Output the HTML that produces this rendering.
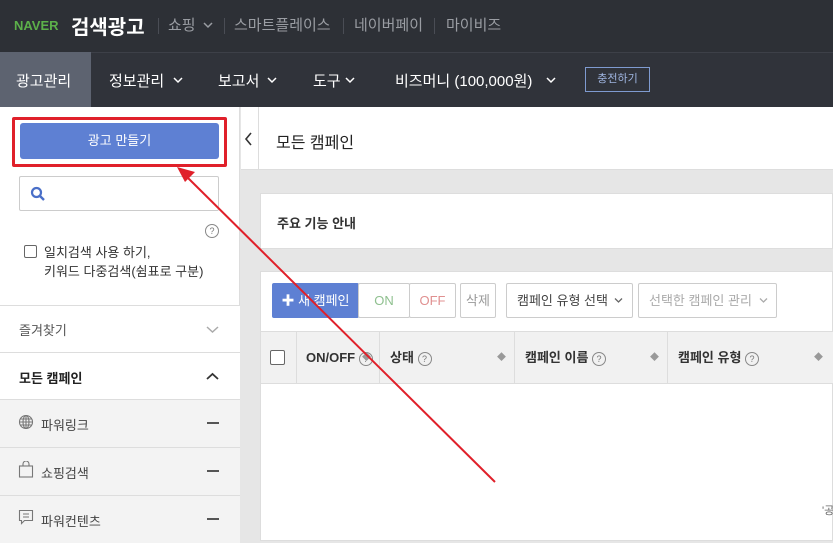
<!DOCTYPE html>
<html><head><meta charset="utf-8"><style>
*{box-sizing:border-box;margin:0;padding:0}
body{width:833px;height:541px;overflow:hidden;position:relative;font-family:"Liberation Sans","Noto Sans CJK KR",sans-serif;background:#e6e6e6;font-size:13px;color:#333}
.a{position:absolute}
.t{position:absolute;white-space:nowrap}
.row{position:absolute;left:0;width:240px;border-top:1px solid #ddd}
.btn{position:absolute;top:283px;height:35px;border:1px solid #ccc;background:#fff;font-size:13px;line-height:33px;text-align:center;border-radius:2px}
.th{position:absolute;top:331px;height:53px;border-right:1px solid #ddd;font-weight:bold;font-size:13px;line-height:53px;padding-left:10px;color:#333}
.q{display:inline-block;width:14px;height:14px;border:1px solid #888;border-radius:50%;font-size:9px;line-height:12px;text-align:center;font-weight:normal;color:#777;vertical-align:middle}
.s{position:absolute;right:8px;top:0;color:#999;font-size:9px;line-height:53px}
.sep{position:absolute;top:18px;width:1px;height:16px;background:#4a4d55}
.mi{position:absolute;left:207px;width:12px;height:2px;background:#555}
</style></head><body>
<div class="a" style="left:0;top:0;width:833px;height:52px;background:#2d3036"></div>
<div class="t" style="left:14px;top:18px;color:#5cb04a;font-weight:900;font-size:13px">NAVER</div>
<div class="t" style="left:71px;top:11px;color:#fff;font-size:20px;font-weight:bold">검색광고</div>
<div class="sep" style="left:158px"></div>
<div class="t" style="left:168px;top:14px;color:#9a9da3;font-size:15px">쇼핑</div>
<svg class="a" style="left:203px;top:21px" width="10" height="8"><path d="M1 2l4 4 4-4" fill="none" stroke="#9a9da3" stroke-width="1.5"/></svg>
<div class="sep" style="left:224px"></div>
<div class="t" style="left:234px;top:14px;color:#9a9da3;font-size:15px">스마트플레이스</div>
<div class="sep" style="left:343px"></div>
<div class="t" style="left:354px;top:14px;color:#9a9da3;font-size:15px">네이버페이</div>
<div class="sep" style="left:434px"></div>
<div class="t" style="left:446px;top:14px;color:#9a9da3;font-size:15px">마이비즈</div>
<div class="a" style="left:0;top:52px;width:833px;height:55px;background:#30333a;border-top:1px solid #3d4048"></div>
<div class="a" style="left:0;top:52px;width:91px;height:55px;background:#5d6370"></div>
<div class="t" style="left:16px;top:70px;color:#fff;font-size:15px">광고관리</div>
<div class="t" style="left:109px;top:70px;color:#fff;font-size:15px">정보관리</div>
<svg class="a" style="left:173px;top:76px" width="10" height="8"><path d="M1 2l4 4 4-4" fill="none" stroke="#fff" stroke-width="1.5"/></svg>
<div class="t" style="left:218px;top:70px;color:#fff;font-size:15px">보고서</div>
<svg class="a" style="left:267px;top:76px" width="10" height="8"><path d="M1 2l4 4 4-4" fill="none" stroke="#fff" stroke-width="1.5"/></svg>
<div class="t" style="left:313px;top:70px;color:#fff;font-size:15px">도구</div>
<svg class="a" style="left:345px;top:76px" width="10" height="8"><path d="M1 2l4 4 4-4" fill="none" stroke="#fff" stroke-width="1.5"/></svg>
<div class="t" style="left:395px;top:70px;color:#fff;font-size:15px">비즈머니 (100,000원)</div>
<svg class="a" style="left:546px;top:76px" width="10" height="8"><path d="M1 2l4 4 4-4" fill="none" stroke="#fff" stroke-width="1.5"/></svg>
<div class="a" style="left:585px;top:67px;width:65px;height:25px;border:1px solid #7f9bd0;color:#9fb5e0;font-size:11px;line-height:23px;text-align:center">충전하기</div>

<div class="a" style="left:0;top:107px;width:240px;height:434px;background:#fff;border-right:1px solid #ddd"></div>
<div class="a" style="left:12px;top:117px;width:215px;height:50px;border:3px solid #e0202a;border-radius:2px"></div>
<div class="a" style="left:20px;top:123px;width:199px;height:36px;background:#5e80d3;border-radius:3px;color:#fff;font-size:13px;line-height:36px;text-align:center">광고 만들기</div>
<div class="a" style="left:19px;top:176px;width:200px;height:35px;border:1px solid #ccc;border-radius:2px"></div>
<svg class="a" style="left:30px;top:186px" width="16" height="16"><circle cx="6.5" cy="6.5" r="4.5" fill="none" stroke="#4a6fc8" stroke-width="2.2"/><path d="M10 10l4 4" stroke="#4a6fc8" stroke-width="2.4"/></svg>
<div class="a q" style="left:205px;top:224px">?</div>
<div class="a" style="left:24px;top:245px;width:13px;height:13px;border:1px solid #666;border-radius:2px"></div>
<div class="t" style="left:44px;top:242px;font-size:13px;color:#333">일치검색 사용 하기,</div>
<div class="t" style="left:44px;top:261px;font-size:13px;color:#333">키워드 다중검색(쉼표로 구분)</div>
<div class="row" style="top:305px;height:47px;background:#fff"><span class="t" style="left:19px;top:14px;color:#555">즐겨찾기</span></div>
<svg class="a" style="left:206px;top:325px" width="13" height="9"><path d="M1 2l5.5 5 5.5-5" fill="none" stroke="#aaa" stroke-width="1.5"/></svg>
<div class="row" style="top:352px;height:47px;background:#fff"><span class="t" style="left:19px;top:15px;font-weight:bold;color:#222">모든 캠페인</span></div>
<svg class="a" style="left:206px;top:372px" width="13" height="9"><path d="M1 7l5.5-5 5.5 5" fill="none" stroke="#333" stroke-width="1.8"/></svg>
<div class="row" style="top:399px;height:48px;background:#f3f3f3"><span class="t" style="left:41px;top:15px;color:#444">파워링크</span></div>
<svg class="a" style="left:18px;top:414px" width="16" height="16" fill="none" stroke="#777" stroke-width="1.1"><circle cx="8" cy="8" r="6.5"/><ellipse cx="8" cy="8" rx="3" ry="6.5"/><path d="M1.5 8h13M2.5 5h11M2.5 11h11M8 1.5v13"/></svg>
<div class="mi" style="top:422px"></div>
<div class="row" style="top:447px;height:48px;background:#f3f3f3"><span class="t" style="left:41px;top:15px;color:#444">쇼핑검색</span></div>
<svg class="a" style="left:18px;top:461px" width="16" height="17" fill="none" stroke="#777" stroke-width="1.1"><rect x="1.5" y="5" width="13" height="11"/><path d="M5 5V3a3 3 0 0 1 6 0v2"/></svg>
<div class="mi" style="top:470px"></div>
<div class="row" style="top:495px;height:48px;background:#f3f3f3"><span class="t" style="left:41px;top:15px;color:#444">파워컨텐츠</span></div>
<svg class="a" style="left:18px;top:509px" width="16" height="17" fill="none" stroke="#777" stroke-width="1.1"><path d="M1.5 1.5h13v10h-8l-3 3v-3h-2z"/><path d="M5 5h6M5 8h6"/></svg>
<div class="mi" style="top:518px"></div>

<div class="a" style="left:241px;top:107px;width:592px;height:63px;background:#fff;border-bottom:1px solid #ddd"></div>
<div class="a" style="left:258px;top:107px;width:1px;height:63px;background:#ddd"></div>
<svg class="a" style="left:244px;top:132px" width="9" height="14"><path d="M7 1L2 7l5 6" fill="none" stroke="#333" stroke-width="1.6"/></svg>
<div class="t" style="left:276px;top:129px;font-size:16px;color:#222">모든 캠페인</div>
<div class="a" style="left:260px;top:193px;width:573px;height:56px;background:#fff;border:1px solid #ddd"></div>
<div class="t" style="left:277px;top:213px;font-size:13px;font-weight:bold;color:#333">주요 기능 안내</div>
<div class="a" style="left:260px;top:271px;width:573px;height:270px;background:#fff;border:1px solid #ddd"></div>
<div class="a" style="left:272px;top:283px;width:87px;height:35px;background:#5e80d3;border-radius:2px;color:#fff;line-height:35px;font-size:13px;text-align:center">✚ 새 캠페인</div>
<div class="btn" style="left:358px;width:52px;color:#8fc08f">ON</div>
<div class="btn" style="left:409px;width:47px;color:#e09090">OFF</div>
<div class="btn" style="left:460px;width:36px;color:#999">삭제</div>
<div class="btn" style="left:506px;width:127px;color:#444;text-align:left;padding-left:10px">캠페인 유형 선택</div>
<svg class="a" style="left:614px;top:297px" width="9" height="7"><path d="M1 1.5l3.5 3.5 3.5-3.5" fill="none" stroke="#666" stroke-width="1.3"/></svg>
<div class="btn" style="left:638px;width:139px;color:#aaa;text-align:left;padding-left:10px">선택한 캠페인 관리</div>
<svg class="a" style="left:759px;top:297px" width="9" height="7"><path d="M1 1.5l3.5 3.5 3.5-3.5" fill="none" stroke="#aaa" stroke-width="1.3"/></svg>
<div class="a" style="left:261px;top:331px;width:572px;height:53px;background:#f1f1f1;border-top:1px solid #ddd;border-bottom:1px solid #ddd"></div>
<div class="a" style="left:270px;top:350px;width:15px;height:15px;border:1px solid #666;border-radius:2px;background:#fff"></div>
<div class="a" style="left:296px;top:331px;width:1px;height:53px;background:#ddd"></div>
<div class="th" style="left:296px;width:84px">ON/OFF <span class="q">?</span><span class="s">◆</span></div>
<div class="th" style="left:380px;width:135px">상태 <span class="q">?</span><span class="s">◆</span></div>
<div class="th" style="left:515px;width:153px">캠페인 이름 <span class="q">?</span><span class="s">◆</span></div>
<div class="th" style="left:668px;width:165px;border:0">캠페인 유형 <span class="q">?</span><span class="s" style="right:10px">◆</span></div>
<div class="t" style="left:822px;top:502px;font-size:11px;color:#666">'공</div>
<svg class="a" style="left:0;top:0" width="833" height="541"><path d="M495 482L186 176" stroke="#e0202a" stroke-width="2"/><path d="M177 167l18 5-10 10z" fill="#e0202a"/></svg>
</body></html>
